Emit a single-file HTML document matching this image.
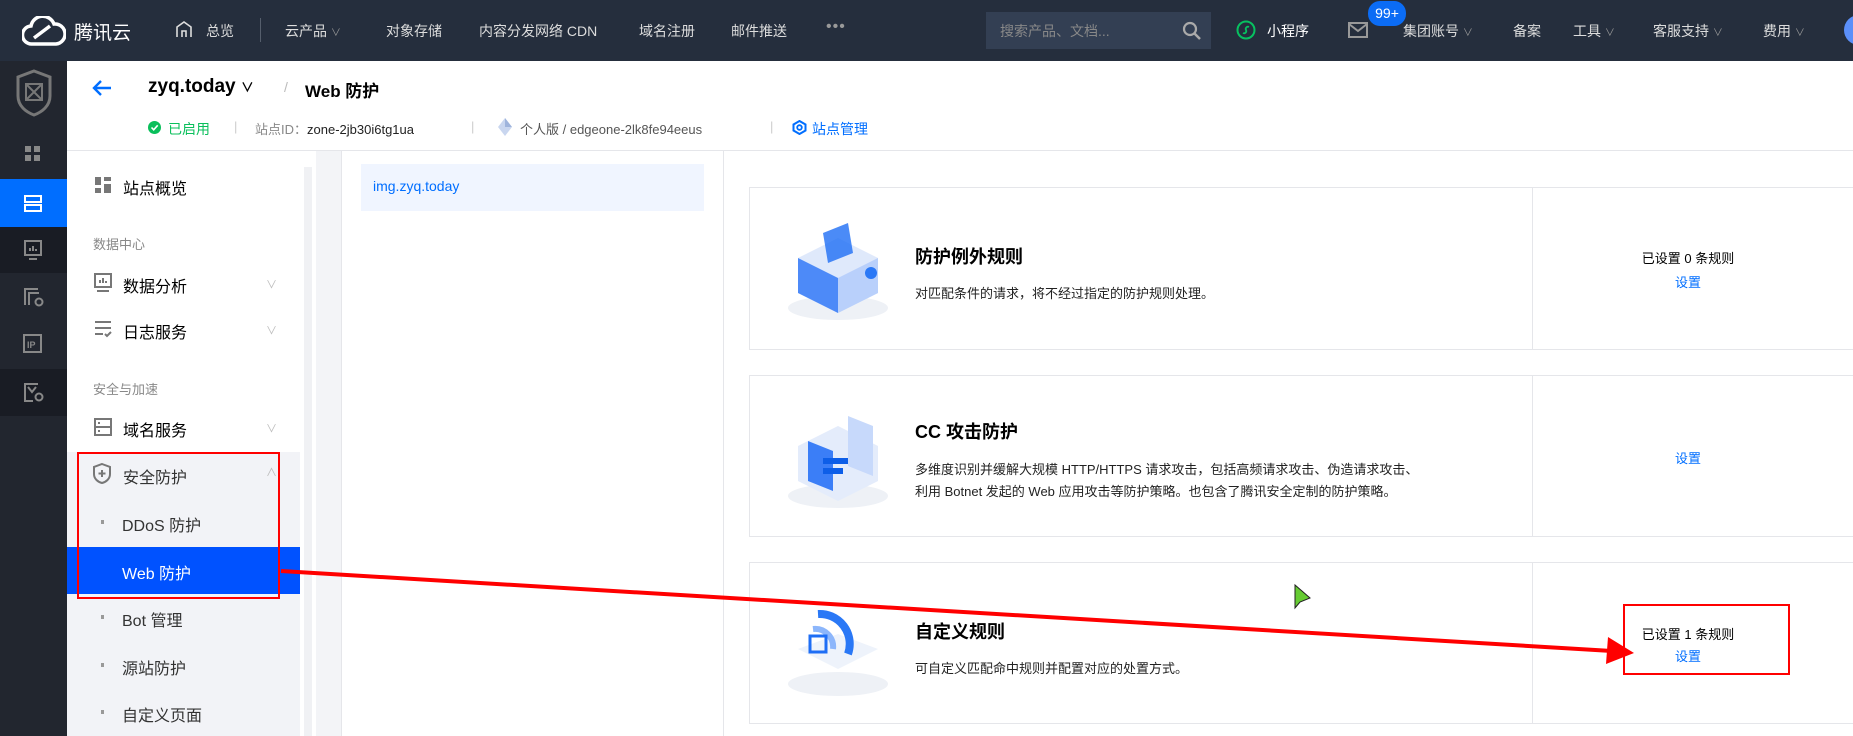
<!DOCTYPE html>
<html><head><meta charset="utf-8"><style>
*{margin:0;padding:0;box-sizing:border-box}
body{width:1853px;height:736px;overflow:hidden;position:relative;background:#fff;font-family:"Liberation Sans","Noto Sans CJK SC",sans-serif;color:#000}
.a{position:absolute;white-space:nowrap}
.top{left:0;top:0;width:1853px;height:61px;background:#252e3d}
.top .t{color:#fff;font-size:14px;top:21px}
.rail{left:0;top:61px;width:67px;height:675px;background:#22262f}
.side{left:67px;top:151px;width:233px;height:585px;background:#fff}
.mi{font-size:16px;color:#000}
.sec{font-size:13px;color:#888}
.chev{color:#bbb;font-size:11px}
.card{left:749px;width:1110px;border:1px solid #e5e6ea;background:#fff}
.card .div{position:absolute;left:782px;top:0;bottom:0;border-left:1px solid #e5e6ea}
.ct{font-size:18px;font-weight:bold}
.cd{font-size:13px;color:#222}
.bl{color:#006eff;font-size:13px}
</style></head><body>
<div class="a top"></div>
<svg class="a" style="left:22px;top:16px" width="44" height="30" viewBox="0 0 44 30"><path d="M10 28 A9 9 0 0 1 9 10 A12 12 0 0 1 32 8 A10 10 0 0 1 34 28 Z M12 22 L28 10" fill="none" stroke="#fff" stroke-width="3.5"/></svg>
<div class="a" style="left:74px;top:18px;color:#fff;font-size:19px">腾讯云</div>
<svg class="a" style="left:175px;top:20px" width="18" height="18" viewBox="0 0 18 18"><path d="M2 17V7L9 2L16 7V17M7 17V11h4v6" fill="none" stroke="#ddd" stroke-width="1.6"/></svg>
<div class="a t" style="left:206px;color:#ddd;font-size:14px;top:21px">总览</div>
<div class="a" style="left:260px;top:18px;width:1px;height:24px;background:#555e6c"></div>
<div class="a" style="left:285px;top:21px;color:#ddd;font-size:14px">云产品 <span style="font-size:10px;color:#999">∨</span></div>
<div class="a" style="left:386px;top:21px;color:#ddd;font-size:14px">对象存储</div>
<div class="a" style="left:479px;top:21px;color:#ddd;font-size:14px">内容分发网络 CDN</div>
<div class="a" style="left:639px;top:21px;color:#ddd;font-size:14px">域名注册</div>
<div class="a" style="left:731px;top:21px;color:#ddd;font-size:14px">邮件推送</div>
<div class="a" style="left:826px;top:18px;color:#999;font-size:16px;letter-spacing:1px">•••</div>
<div class="a" style="left:986px;top:12px;width:225px;height:37px;background:#333f53"></div>
<div class="a" style="left:1000px;top:21px;color:#888;font-size:14px">搜索产品、文档...</div>
<svg class="a" style="left:1182px;top:21px" width="20" height="20" viewBox="0 0 20 20"><circle cx="8" cy="8" r="6" fill="none" stroke="#aaa" stroke-width="2.2"/><path d="M12.5 12.5L18 18" stroke="#aaa" stroke-width="2.5"/></svg>
<svg class="a" style="left:1236px;top:20px" width="20" height="20" viewBox="0 0 20 20"><circle cx="10" cy="10" r="8.5" fill="none" stroke="#07c160" stroke-width="2"/><path d="M7 13c2 1 4-1 3-3s1-4 3-3" fill="none" stroke="#07c160" stroke-width="1.8"/></svg>
<div class="a" style="left:1267px;top:21px;color:#fff;font-size:14px">小程序</div>
<svg class="a" style="left:1348px;top:22px" width="20" height="16" viewBox="0 0 20 16"><rect x="1" y="1" width="18" height="14" fill="none" stroke="#999" stroke-width="2"/><path d="M1 2L10 9L19 2" fill="none" stroke="#999" stroke-width="2"/></svg>
<div class="a" style="left:1368px;top:1px;width:38px;height:25px;border-radius:12px;background:#0b6cf5;color:#fff;font-size:14px;text-align:center;line-height:25px">99+</div>
<div class="a" style="left:1403px;top:21px;color:#ddd;font-size:14px">集团账号 <span style="font-size:10px;color:#999">∨</span></div>
<div class="a" style="left:1513px;top:21px;color:#ddd;font-size:14px">备案</div>
<div class="a" style="left:1573px;top:21px;color:#ddd;font-size:14px">工具 <span style="font-size:10px;color:#999">∨</span></div>
<div class="a" style="left:1653px;top:21px;color:#ddd;font-size:14px">客服支持 <span style="font-size:10px;color:#999">∨</span></div>
<div class="a" style="left:1763px;top:21px;color:#ddd;font-size:14px">费用 <span style="font-size:10px;color:#999">∨</span></div>
<div class="a" style="left:1844px;top:15px;width:30px;height:30px;border-radius:50%;background:#5b8ff9"></div>

<div class="a rail"></div>
<svg class="a" style="left:14px;top:68px" width="40" height="50" viewBox="0 0 40 50"><path d="M20 3L36 9V28C36 38 28 44 20 47C12 44 4 38 4 28V9Z" fill="none" stroke="#777" stroke-width="3"/><rect x="12" y="16" width="16" height="16" fill="none" stroke="#777" stroke-width="2"/><path d="M12 16L28 32M28 16L12 32" stroke="#777" stroke-width="2"/></svg>
<div class="a" style="left:0;top:179px;width:67px;height:48px;background:#006eff"></div>
<div class="a" style="left:0;top:227px;width:67px;height:46px;background:#191c24"></div>
<div class="a" style="left:0;top:369px;width:67px;height:47px;background:#191c24"></div>
<svg class="a" style="left:24px;top:145px" width="18" height="18"><rect x="1" y="1" width="6" height="6" fill="#888"/><rect x="10" y="1" width="6" height="6" fill="#888"/><rect x="1" y="10" width="6" height="6" fill="#888"/><rect x="10" y="10" width="6" height="6" fill="#888"/></svg>
<svg class="a" style="left:24px;top:194px" width="18" height="18"><rect x="1" y="2" width="16" height="6" fill="none" stroke="#fff" stroke-width="2"/><rect x="1" y="11" width="16" height="6" fill="none" stroke="#fff" stroke-width="2"/></svg>
<svg class="a" style="left:24px;top:240px" width="18" height="20"><rect x="1" y="1" width="16" height="14" fill="none" stroke="#888" stroke-width="2"/><path d="M5 19h8M6 11V8M9 11V6M12 11V9" stroke="#888" stroke-width="2"/></svg>
<svg class="a" style="left:24px;top:288px" width="20" height="20"><path d="M1 17V1h13" fill="none" stroke="#888" stroke-width="2"/><path d="M5 17V5h10" fill="none" stroke="#888" stroke-width="2"/><circle cx="15" cy="14" r="3.5" fill="none" stroke="#888" stroke-width="2"/></svg>
<svg class="a" style="left:23px;top:334px" width="20" height="20"><rect x="1" y="1" width="17" height="17" fill="none" stroke="#888" stroke-width="2"/><text x="4" y="14" font-size="9" fill="#888" font-family="Liberation Sans" font-weight="bold">IP</text></svg>
<svg class="a" style="left:24px;top:383px" width="20" height="20"><path d="M14 1H1V18H9" fill="none" stroke="#888" stroke-width="2"/><path d="M4 4L8 9L12 4" fill="none" stroke="#888" stroke-width="2"/><circle cx="15" cy="14" r="3.5" fill="none" stroke="#888" stroke-width="2"/></svg>

<!-- header -->
<div class="a" style="left:67px;top:150px;width:1786px;height:1px;background:#e5e6ea"></div>
<svg class="a" style="left:92px;top:79px" width="20" height="18" viewBox="0 0 20 18"><path d="M9 2L2 9L9 16M2 9H19" fill="none" stroke="#006eff" stroke-width="2.4"/></svg>
<div class="a" style="left:148px;top:76px;font-size:19px;font-weight:bold">zyq.today <span style="font-size:13px">∨</span></div>
<div class="a" style="left:284px;top:79px;font-size:14px;color:#bbb">/</div>
<div class="a" style="left:305px;top:77px;font-size:17px;font-weight:bold">Web 防护</div>
<div class="a" style="left:148px;top:121px;width:13px;height:13px;border-radius:50%;background:#0abf5b"></div>
<svg class="a" style="left:148px;top:121px" width="13" height="13"><path d="M3.5 6.5L5.7 8.8L9.7 4.3" fill="none" stroke="#fff" stroke-width="1.6"/></svg>
<div class="a" style="left:168px;top:119px;font-size:14px;color:#0abf5b">已启用</div>
<div class="a" style="left:234px;top:119px;font-size:13px;color:#ccc">|</div>
<div class="a" style="left:255px;top:119px;font-size:13px;color:#888">站点ID：<span style="color:#222">zone-2jb30i6tg1ua</span></div>
<div class="a" style="left:471px;top:119px;font-size:13px;color:#ccc">|</div>
<svg class="a" style="left:497px;top:117px" width="16" height="20"><path d="M8 1L15 10L8 19L1 10Z" fill="#c9d6ef"/><path d="M8 1L15 10L8 10Z" fill="#9fb4dc"/></svg>
<div class="a" style="left:520px;top:119px;font-size:13px;color:#555">个人版 / edgeone-2lk8fe94eeus</div>
<div class="a" style="left:770px;top:119px;font-size:13px;color:#ccc">|</div>
<svg class="a" style="left:792px;top:120px" width="15" height="15"><path d="M7.5 1L13.5 4.5V10.5L7.5 14L1.5 10.5V4.5Z" fill="none" stroke="#006eff" stroke-width="2"/><circle cx="7.5" cy="7.5" r="2.3" fill="none" stroke="#006eff" stroke-width="1.8"/></svg>
<div class="a" style="left:812px;top:119px;font-size:14px;color:#006eff">站点管理</div>

<!-- side menu -->
<div class="a side"></div>
<div class="a" style="left:304px;top:167px;width:8px;height:569px;background:#f0f1f4"></div>
<div class="a" style="left:316px;top:151px;width:25px;height:585px;background:#f3f4f7"></div>
<div class="a" style="left:341px;top:151px;width:1px;height:585px;background:#e5e6ea"></div>
<div class="a" style="left:723px;top:151px;width:1px;height:585px;background:#e5e6ea"></div>
<svg class="a" style="left:94px;top:176px" width="18" height="18"><rect x="1" y="1" width="6" height="8" fill="#777"/><rect x="10" y="1" width="7" height="4" fill="#777"/><rect x="1" y="12" width="6" height="5" fill="#777"/><rect x="10" y="8" width="7" height="9" fill="#777"/></svg>
<div class="a mi" style="left:123px;top:175px">站点概览</div>
<div class="a sec" style="left:93px;top:234px">数据中心</div>
<svg class="a" style="left:94px;top:273px" width="18" height="20"><rect x="1" y="1" width="16" height="13" fill="none" stroke="#777" stroke-width="2"/><path d="M3 18h12M6 10V7M9 10V5M12 10V8" stroke="#777" stroke-width="2"/></svg>
<div class="a mi" style="left:123px;top:273px">数据分析</div><div class="a chev" style="left:266px;top:276px">∨</div>
<svg class="a" style="left:94px;top:320px" width="18" height="18"><path d="M1 2h16M1 8h16M1 14h8" stroke="#777" stroke-width="2"/><path d="M11 14l2 2 4-4" fill="none" stroke="#777" stroke-width="2"/></svg>
<div class="a mi" style="left:123px;top:319px">日志服务</div><div class="a chev" style="left:266px;top:322px">∨</div>
<div class="a sec" style="left:93px;top:379px">安全与加速</div>
<svg class="a" style="left:94px;top:418px" width="18" height="18"><rect x="1" y="1" width="16" height="16" fill="none" stroke="#777" stroke-width="2"/><path d="M1 9h16M4 5h2M4 13h2" stroke="#777" stroke-width="2"/></svg>
<div class="a mi" style="left:123px;top:417px">域名服务</div><div class="a chev" style="left:266px;top:420px">∨</div>
<div class="a" style="left:67px;top:452px;width:233px;height:284px;background:#f2f3f7"></div>
<svg class="a" style="left:93px;top:463px" width="18" height="21"><path d="M9 1L17 4V11C17 16 13 19 9 20C5 19 1 16 1 11V4Z" fill="none" stroke="#777" stroke-width="2"/><path d="M9 7V14M5.5 10.5H12.5" stroke="#777" stroke-width="2"/></svg>
<div class="a mi" style="left:123px;top:464px;color:#333">安全防护</div><div class="a chev" style="left:266px;top:464px">∧</div>
<div class="a" style="left:101px;top:520px;width:3px;height:4px;background:#999"></div>
<div class="a mi" style="left:122px;top:512px;color:#333">DDoS 防护</div>
<div class="a" style="left:67px;top:547px;width:233px;height:47px;background:#0052ff"></div>
<div class="a mi" style="left:122px;top:560px;color:#fff">Web 防护</div>
<div class="a" style="left:101px;top:615px;width:3px;height:4px;background:#999"></div>
<div class="a mi" style="left:122px;top:607px;color:#333">Bot 管理</div>
<div class="a" style="left:101px;top:663px;width:3px;height:4px;background:#999"></div>
<div class="a mi" style="left:122px;top:655px;color:#333">源站防护</div>
<div class="a" style="left:101px;top:710px;width:3px;height:4px;background:#999"></div>
<div class="a mi" style="left:122px;top:702px;color:#333">自定义页面</div>
<div class="a" style="left:77px;top:452px;width:203px;height:147px;border:2px solid #f00"></div>

<div class="a" style="left:361px;top:164px;width:343px;height:47px;background:#f0f5ff"></div>
<div class="a" style="left:373px;top:178px;font-size:14px;color:#006eff">img.zyq.today</div>

<!-- cards -->
<div class="a card" style="top:187px;height:163px"><div class="div"></div></div>
<div class="a card" style="top:375px;height:162px"><div class="div"></div></div>
<div class="a card" style="top:562px;height:162px"><div class="div"></div></div>
<svg class="a" style="left:778px;top:218px" width="115" height="104"><ellipse cx="60" cy="90" rx="50" ry="12" fill="#eef1f6"/><path d="M20 40L60 20L100 40V75L60 95L20 75Z" fill="#dfe9fb"/><path d="M20 40L60 60V95L20 75Z" fill="#4d8af8"/><path d="M60 60L100 40V75L60 95Z" fill="#b9d0fb"/><path d="M45 15L70 5L75 35L50 45Z" fill="#1e6ef5" opacity=".8"/><circle cx="93" cy="55" r="6" fill="#2a78f6"/></svg>
<svg class="a" style="left:778px;top:406px" width="115" height="104"><ellipse cx="60" cy="90" rx="50" ry="12" fill="#eef1f6"/><path d="M20 40L60 20L100 40V75L60 95L20 75Z" fill="#e4ecfb"/><path d="M30 35L55 45V85L30 75Z" fill="#3b7ef7"/><path d="M70 10L95 20V70L70 60Z" fill="#c7d9fb"/><path d="M45 55h25M45 65h20" stroke="#0d5ee8" stroke-width="6"/></svg>
<svg class="a" style="left:778px;top:594px" width="115" height="104"><ellipse cx="60" cy="90" rx="50" ry="12" fill="#eef1f6"/><path d="M20 55L60 40L100 55L60 75Z" fill="#eef3fb"/><path d="M40 20A30 30 0 0 1 70 60" fill="none" stroke="#2a78f6" stroke-width="8"/><path d="M35 35A18 18 0 0 1 55 55" fill="none" stroke="#8cb6fb" stroke-width="6"/><rect x="32" y="42" width="16" height="16" fill="none" stroke="#1e6ef5" stroke-width="3"/></svg>

<div class="a ct" style="left:915px;top:243px">防护例外规则</div>
<div class="a cd" style="left:915px;top:283px">对匹配条件的请求，将不经过指定的防护规则处理。</div>
<div class="a" style="left:1600px;top:248px;width:176px;text-align:center;font-size:13px">已设置 0 条规则</div>
<div class="a bl" style="left:1600px;top:272px;width:176px;text-align:center">设置</div>

<div class="a ct" style="left:915px;top:418px">CC 攻击防护</div>
<div class="a cd" style="left:915px;top:459px">多维度识别并缓解大规模 HTTP/HTTPS 请求攻击，包括高频请求攻击、伪造请求攻击、</div>
<div class="a cd" style="left:915px;top:481px">利用 Botnet 发起的 Web 应用攻击等防护策略。也包含了腾讯安全定制的防护策略。</div>
<div class="a bl" style="left:1600px;top:448px;width:176px;text-align:center">设置</div>

<div class="a ct" style="left:915px;top:618px">自定义规则</div>
<div class="a cd" style="left:915px;top:658px">可自定义匹配命中规则并配置对应的处置方式。</div>
<div class="a" style="left:1600px;top:624px;width:176px;text-align:center;font-size:13px">已设置 1 条规则</div>
<div class="a bl" style="left:1600px;top:646px;width:176px;text-align:center">设置</div>
<div class="a" style="left:1623px;top:604px;width:167px;height:71px;border:2px solid #f00"></div>

<svg class="a" style="left:0;top:0" width="1853" height="736"><path d="M281 571L1612 651" stroke="#f00" stroke-width="4"/><path d="M1634 653L1608 637L1606 664Z" fill="#f00"/><path d="M1295 585L1295 608L1300 602L1310 598Z" fill="#6c3" stroke="#222" stroke-width="1"/></svg>
</body></html>
